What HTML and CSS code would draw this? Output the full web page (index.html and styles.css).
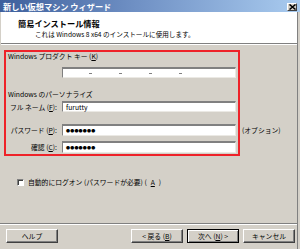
FILE: index.html
```html
<!DOCTYPE html>
<html lang="ja">
<head>
    <meta charset="UTF-8">
    <title>新しい仮想マシン ウィザード</title>
    <link rel="stylesheet" href="styles.css">
</head>
<body>
<div class="window">
    <div class="titlebar">
        <span class="title">新しい仮想マシン ウィザード</span>
        <button class="close-btn" aria-label="閉じる">
            <svg width="7" height="6" viewBox="0 0 7 6"><path d="M0.5 0.5 L6.5 5.5 M6.5 0.5 L0.5 5.5" stroke="#000" stroke-width="1.5"/></svg>
        </button>
    </div>

    <div class="dialog">
        <div class="header">
            <div class="header-title">簡易インストール情報</div>
            <div class="header-sub">これは Windows 8 x64 のインストールに使用します。</div>
        </div>

        <div class="content">
            <div class="section-label">Windows プロダクト キー (<u>K</u>)</div>
            <div class="row row-key">
                <span class="field-label"></span>
                <div class="field key-field">
                    <span class="dash"></span>
                    <span class="dash"></span>
                    <span class="dash"></span>
                    <span class="dash"></span>
                </div>
            </div>

            <div class="section-label section-gap">Windows のパーソナライズ</div>
            <div class="row row-name">
                <span class="field-label">フル ネーム (<u>F</u>):</span>
                <div class="field">furutty</div>
            </div>
            <div class="row row-pass">
                <span class="field-label">パスワード (<u>P</u>):</span>
                <div class="field dots">●●●●●●●</div>
                <span class="note">(オプション)</span>
            </div>
            <div class="row row-confirm">
                <span class="field-label">確認 (<u>C</u>):</span>
                <div class="field dots">●●●●●●●</div>
            </div>

            <label class="autologon">
                <span class="checkbox"></span>
                自動的にログオン (パスワードが必要) (<u>A</u>)
            </label>

            <div class="highlight"></div>
        </div>

        <div class="footer">
            <button class="btn">ヘルプ</button>
            <div class="btn-group">
                <button class="btn">&lt; 戻る (<u>B</u>)</button>
                <button class="btn btn-default">次へ (<u>N</u>) &gt;</button>
                <button class="btn">キャンセル</button>
            </div>
        </div>
    </div>
</div>
</body>
</html>
```

FILE: styles.css
```css
:root {
    --face: #d4d0c8;
    --shadow: #808080;
    --dark: #404040;
    --light: #ffffff;
    --accent: #ee2229;
    --font: "Noto Sans CJK JP", "Liberation Sans", sans-serif;
}
html, body {
    margin: 0;
    background: var(--face);
}
body {
    font-family: var(--font);
    font-size: 6.8px;
    line-height: 8px;
    color: #000;
}
u { text-decoration: underline; }
.window {
    width: 300px;
    height: 249px;
    display: flex;
    flex-direction: column;
    overflow: hidden;
}
.titlebar {
    height: 12px;
    flex-shrink: 0;
    display: flex;
    align-items: center;
    justify-content: space-between;
    padding: 0 3px;
    background: linear-gradient(to right, #3d5f9c, #6f90c4 45%, #a9cbef);
}
.title {
    color: #fff;
    font-weight: bold;
    font-size: 8.2px;
}
.close-btn {
    width: 10px;
    height: 8px;
    padding: 0;
    margin-top: 1px;
    display: flex;
    align-items: center;
    justify-content: center;
    background: var(--face);
    border: 1px solid;
    border-color: var(--light) var(--dark) var(--dark) var(--light);
}
.dialog {
    flex: 1;
    display: flex;
    flex-direction: column;
    border-right: 1px solid var(--shadow);
    margin-right: 2px;
    position: relative;
}
.header {
    height: 32px;
    box-sizing: border-box;
    background: #fff;
    margin-left: 1px;
    padding: 7px 0 0 17px;
    border-bottom: 1px solid var(--shadow);
    box-shadow: 0 1px 0 var(--light);
}
.header-title {
    font-weight: bold;
    font-size: 8.2px;
    line-height: 9px;
}
.header-sub {
    padding-left: 17px;
    margin-top: 2px;
    font-size: 6.6px;
}
.content {
    position: relative;
    padding: 8px 0 0 8px;
    flex: 1;
}
.section-label {
    height: 8px;
}
.section-gap {
    margin-top: 12px;
}
.row {
    display: flex;
    align-items: center;
}
.row-key { margin-top: 7px; }
.row-name { margin-top: 3px; }
.row-pass { margin-top: 12px; }
.row-confirm { margin-top: 5px; }
.field-label {
    width: 52px;
    text-align: right;
    margin-left: -3px;
    margin-right: 5px;
    white-space: nowrap;
}
.field {
    width: 174px;
    height: 11px;
    box-sizing: border-box;
    background: #fff;
    border-top: 2px solid var(--shadow);
    border-left: 1px solid var(--shadow);
    border-bottom: 1px solid #ebe9e4;
    border-right: 1px solid #ebe9e4;
    padding-left: 3px;
    display: flex;
    align-items: center;
    font-size: 6.8px;
}
.row-pass .field,
.row-confirm .field {
    height: 12px;
}
.dots {
    font-size: 4px;
    letter-spacing: 0.2px;
}
.key-field {
    padding-left: 26px;
    gap: 27px;
}
.dash {
    width: 3px;
    height: 1px;
    background: var(--shadow);
}
.note {
    margin-left: 6px;
}
.autologon {
    display: flex;
    align-items: center;
    gap: 4px;
    margin: 25px 0 0 9px;
}
.checkbox {
    width: 7px;
    height: 7px;
    box-sizing: border-box;
    background: #fff;
    border-top: 1px solid var(--shadow);
    border-left: 1px solid var(--shadow);
    border-bottom: 1px solid var(--light);
    border-right: 1px solid var(--light);
    box-shadow: inset 1px 1px 0 var(--dark);
}
.highlight {
    position: absolute;
    left: 4px;
    top: 6px;
    width: 236px;
    height: 106px;
    box-sizing: border-box;
    border: 2px solid var(--accent);
    pointer-events: none;
}
.footer {
    border-top: 1px solid var(--shadow);
    box-shadow: inset 0 1px 0 var(--light);
    padding: 5px 2px 6px 6px;
    display: flex;
    justify-content: space-between;
}
.btn-group {
    display: flex;
    gap: 4px;
}
.btn {
    width: 52px;
    height: 14px;
    padding: 0;
    font-family: var(--font);
    font-size: 6.8px;
    line-height: 8px;
    color: #000;
    background: var(--face);
    border: 1px solid;
    border-color: var(--light) var(--dark) var(--dark) var(--light);
    box-shadow: inset -1px -1px 0 var(--shadow);
}
.btn-default {
    outline: 1px solid #000;
    outline-offset: -1px;
    border-color: #000;
    box-shadow: inset 1px 1px 0 var(--light), inset -1px -1px 0 var(--shadow);
}
```
